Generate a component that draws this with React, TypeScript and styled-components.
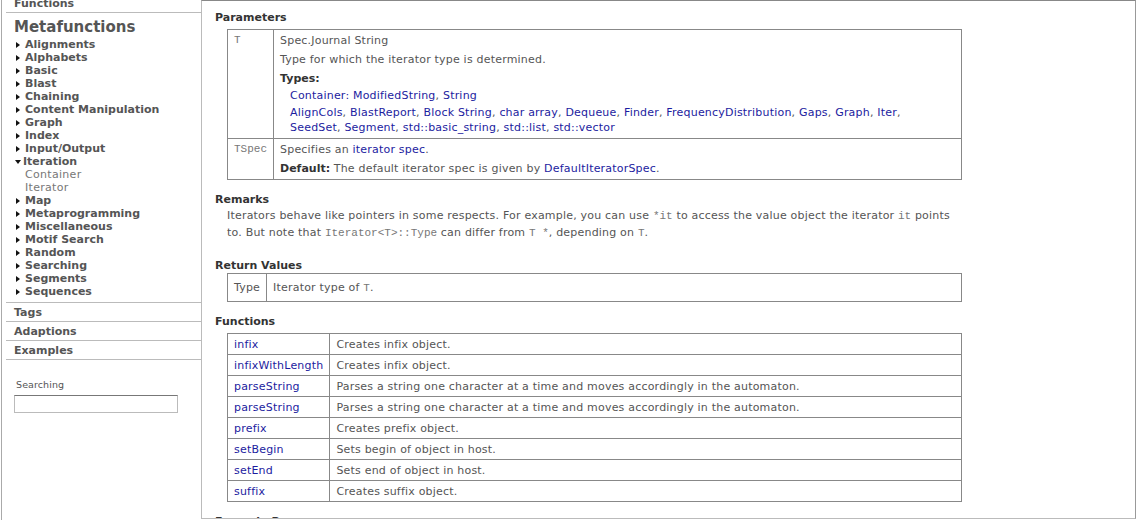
import React from "react";
import styled, { createGlobalStyle } from "styled-components";

const GlobalStyle = createGlobalStyle`
	html, body {
		margin: 0;
		padding: 0;
		background: #fff;
	}
	body {
		font-family: "DejaVu Sans", Verdana, sans-serif;
		font-size: 11px;
		letter-spacing: 0.2px;
		color: #555;
	}
`;

const Page = styled.div`
	display: flex;
	align-items: flex-start;
	width: 1137px;
	height: 520px;
	overflow: hidden;
`;

/* ---------- sidebar ---------- */

const Sidebar = styled.nav`
	width: 199px;
	height: 520px;
	margin-left: 1px;
	border-left: 1px solid #aaa;
	overflow: hidden;
	flex-shrink: 0;
`;

const SidebarInner = styled.div`
	margin-top: -6px;
`;

const SectionTitle = styled.div`
	margin-left: 4px;
	padding-left: 8px;
	height: 18px;
	line-height: 19px;
	border-bottom: 1px solid #bbb;
	font-weight: bold;
	font-size: 11px;
	letter-spacing: 0;
	color: #555;
`;

const Group = styled.div`
	margin-left: 4px;
	padding-bottom: 4px;
	border-bottom: 1px solid #bbb;
`;

const GroupTitle = styled.div`
	padding-left: 8px;
	margin-top: 4px;
	font-size: 15px;
	line-height: 20px;
	font-weight: bold;
	letter-spacing: 0;
	color: #555;
`;

const Tree = styled.ul`
	list-style: none;
	margin: 1px 0 0;
	padding: 0 0 0 10px;
`;

const TreeItem = styled.li<{ $sub?: boolean }>`
	display: flex;
	align-items: center;
	height: 13px;
	line-height: 13px;
	padding-left: ${({ $sub }) => ($sub ? "9px" : "0")};
	font-weight: ${({ $sub }) => ($sub ? "normal" : "bold")};
	color: ${({ $sub }) => ($sub ? "#777" : "#555")};
	letter-spacing: ${({ $sub }) => ($sub ? "0.3px" : "0")};
`;

const Arrow = styled.span<{ $open?: boolean }>`
	display: inline-block;
	width: 0;
	height: 0;
	margin-right: ${({ $open }) => ($open ? "2px" : "5px")};
	margin-left: ${({ $open }) => ($open ? "-1px" : "0")};
	border-style: solid;
	border-color: transparent;
	${({ $open }) =>
		$open
			? "border-width: 4px 3.5px 0 3.5px; border-top-color: #111;"
			: "border-width: 3.5px 0 3.5px 4px; border-left-color: #111;"}
`;

const SearchLabel = styled.label`
	display: block;
	margin: 19px 0 0 14px;
	font-size: 9.5px;
	line-height: 12px;
	letter-spacing: 0.1px;
	color: #555;
`;

const SearchInput = styled.input`
	display: block;
	box-sizing: border-box;
	width: 164px;
	height: 18px;
	margin: 4px 0 0 12px;
	border: 1px solid #bbb;
	border-top-color: #777;
	padding: 0 3px;
	font: 11px "DejaVu Sans", Verdana, sans-serif;
	outline: none;
`;

/* ---------- main ---------- */

const Main = styled.main`
	box-sizing: border-box;
	width: 935px;
	height: 519px;
	border: 1px solid #bbb;
	border-top-color: #888;
	border-right-color: #999;
	padding: 0 13px;
	overflow: hidden;
	flex-shrink: 0;
`;

const Heading = styled.h3<{ $tight?: boolean }>`
	margin: 13px 0 ${({ $tight }) => ($tight ? "0" : "4px")};
	font-size: 11px;
	line-height: 14px;
	font-weight: bold;
	letter-spacing: 0;
	color: #333;

	&:first-child {
		margin-top: 10px;
	}
`;

const Table = styled.table`
	margin-left: 12px;
	width: 735px;
	border-collapse: collapse;
	border: 1px solid #888;
`;

const Cell = styled.td<{ $pad?: string; $code?: boolean; $narrow?: boolean }>`
	border: 1px solid #888;
	padding: ${({ $pad }) => $pad || "3px 6px"};
	vertical-align: top;
	line-height: 15px;
	color: ${({ $code }) => ($code ? "#777" : "#555")};
	font-family: ${({ $code }) =>
		$code ? '"Liberation Mono", "Courier New", monospace' : "inherit"};
	letter-spacing: ${({ $code }) => ($code ? "0" : "inherit")};
	width: ${({ $narrow }) => ($narrow ? "1px" : "auto")};
	white-space: ${({ $narrow }) => ($narrow ? "nowrap" : "normal")};
`;

const Para = styled.p`
	margin: 4px 0 0;
	line-height: 15px;

	&:first-child {
		margin-top: 0;
	}
`;

const Strong = styled.b`
	color: #333;
	letter-spacing: 0;
`;

const TypeList = styled.div`
	margin-left: 10px;
`;

const TypeLine = styled.div`
	margin-top: 2px;
	line-height: 15px;
`;

const Link = styled.a`
	color: #1c1ca0;
	text-decoration: none;
`;

const Code = styled.code`
	font-family: "Liberation Mono", "Courier New", monospace;
	font-size: 11px;
	line-height: 1;
	letter-spacing: 0;
	color: #777;
`;

const Remark = styled.p`
	margin: -4px 0 18px 12px;
	width: 732px;
	line-height: 17px;
	color: #555;
`;

const sidebarGroups: { name: string; open?: boolean; children?: string[] }[] = [
	{ name: "Alignments" },
	{ name: "Alphabets" },
	{ name: "Basic" },
	{ name: "Blast" },
	{ name: "Chaining" },
	{ name: "Content Manipulation" },
	{ name: "Graph" },
	{ name: "Index" },
	{ name: "Input/Output" },
	{ name: "Iteration", open: true, children: ["Container", "Iterator"] },
	{ name: "Map" },
	{ name: "Metaprogramming" },
	{ name: "Miscellaneous" },
	{ name: "Motif Search" },
	{ name: "Random" },
	{ name: "Searching" },
	{ name: "Segments" },
	{ name: "Sequences" },
];

const otherTypes = [
	"AlignCols",
	"BlastReport",
	"Block String",
	"char array",
	"Dequeue",
	"Finder",
	"FrequencyDistribution",
	"Gaps",
	"Graph",
	"Iter",
	"SeedSet",
	"Segment",
	"std::basic_string",
	"std::list",
	"std::vector",
];

const functions = [
	["infix", "Creates infix object."],
	["infixWithLength", "Creates infix object."],
	["parseString", "Parses a string one character at a time and moves accordingly in the automaton."],
	["parseString", "Parses a string one character at a time and moves accordingly in the automaton."],
	["prefix", "Creates prefix object."],
	["setBegin", "Sets begin of object in host."],
	["setEnd", "Sets end of object in host."],
	["suffix", "Creates suffix object."],
];

export default function App() {
	return (
		<>
			<GlobalStyle />
			<Page>
				<Sidebar>
					<SidebarInner>
						<SectionTitle>Functions</SectionTitle>
						<Group>
							<GroupTitle>Metafunctions</GroupTitle>
							<Tree>
								{sidebarGroups.map((g) => (
									<React.Fragment key={g.name}>
										<TreeItem>
											<Arrow $open={g.open} />
											{g.name}
										</TreeItem>
										{g.children?.map((c) => (
											<TreeItem $sub key={c}>
												{c}
											</TreeItem>
										))}
									</React.Fragment>
								))}
							</Tree>
						</Group>
						<SectionTitle>Tags</SectionTitle>
						<SectionTitle>Adaptions</SectionTitle>
						<SectionTitle>Examples</SectionTitle>
						<SearchLabel htmlFor="search">Searching</SearchLabel>
						<SearchInput id="search" type="text" />
					</SidebarInner>
				</Sidebar>

				<Main>
					<Heading>Parameters</Heading>
					<Table>
						<tbody>
							<tr>
								<Cell $code $narrow>
									T
								</Cell>
								<Cell>
									<Para>Spec.Journal String</Para>
									<Para>Type for which the iterator type is determined.</Para>
									<Para>
										<Strong>Types:</Strong>
									</Para>
									<TypeList>
										<TypeLine>
											<Link href="#">Container: ModifiedString</Link>, <Link href="#">String</Link>
										</TypeLine>
										<TypeLine>
											{otherTypes.map((t, i) => (
												<React.Fragment key={t}>
													<Link href="#">{t}</Link>
													{i < otherTypes.length - 1 ? ", " : ""}
												</React.Fragment>
											))}
										</TypeLine>
									</TypeList>
								</Cell>
							</tr>
							<tr>
								<Cell $code $narrow>
									TSpec
								</Cell>
								<Cell>
									<Para>
										Specifies an <Link href="#">iterator spec</Link>.
									</Para>
									<Para>
										<Strong>Default:</Strong> The default iterator spec is given by{" "}
										<Link href="#">DefaultIteratorSpec</Link>.
									</Para>
								</Cell>
							</tr>
						</tbody>
					</Table>

					<Heading>Remarks</Heading>
					<Remark>
						Iterators behave like pointers in some respects. For example, you can use <Code>*it</Code> to
						access the value object the iterator <Code>it</Code> points to. But note that{" "}
						<Code>Iterator&lt;T&gt;::Type</Code> can differ from <Code>T *</Code>, depending on{" "}
						<Code>T</Code>.
					</Remark>

					<Heading $tight>Return Values</Heading>
					<Table>
						<tbody>
							<tr>
								<Cell $narrow $pad="6px 6px">
									Type
								</Cell>
								<Cell $pad="6px 6px">
									Iterator type of <Code>T</Code>.
								</Cell>
							</tr>
						</tbody>
					</Table>

					<Heading>Functions</Heading>
					<Table>
						<tbody>
							{functions.map(([name, desc], i) => (
								<tr key={i}>
									<Cell $narrow $pad="3px 6px 2px">
										<Link href="#">{name}</Link>
									</Cell>
									<Cell $pad="3px 6px 2px">{desc}</Cell>
								</tr>
							))}
						</tbody>
					</Table>

					<Heading>Example Programs</Heading>
				</Main>
			</Page>
		</>
	);
}
